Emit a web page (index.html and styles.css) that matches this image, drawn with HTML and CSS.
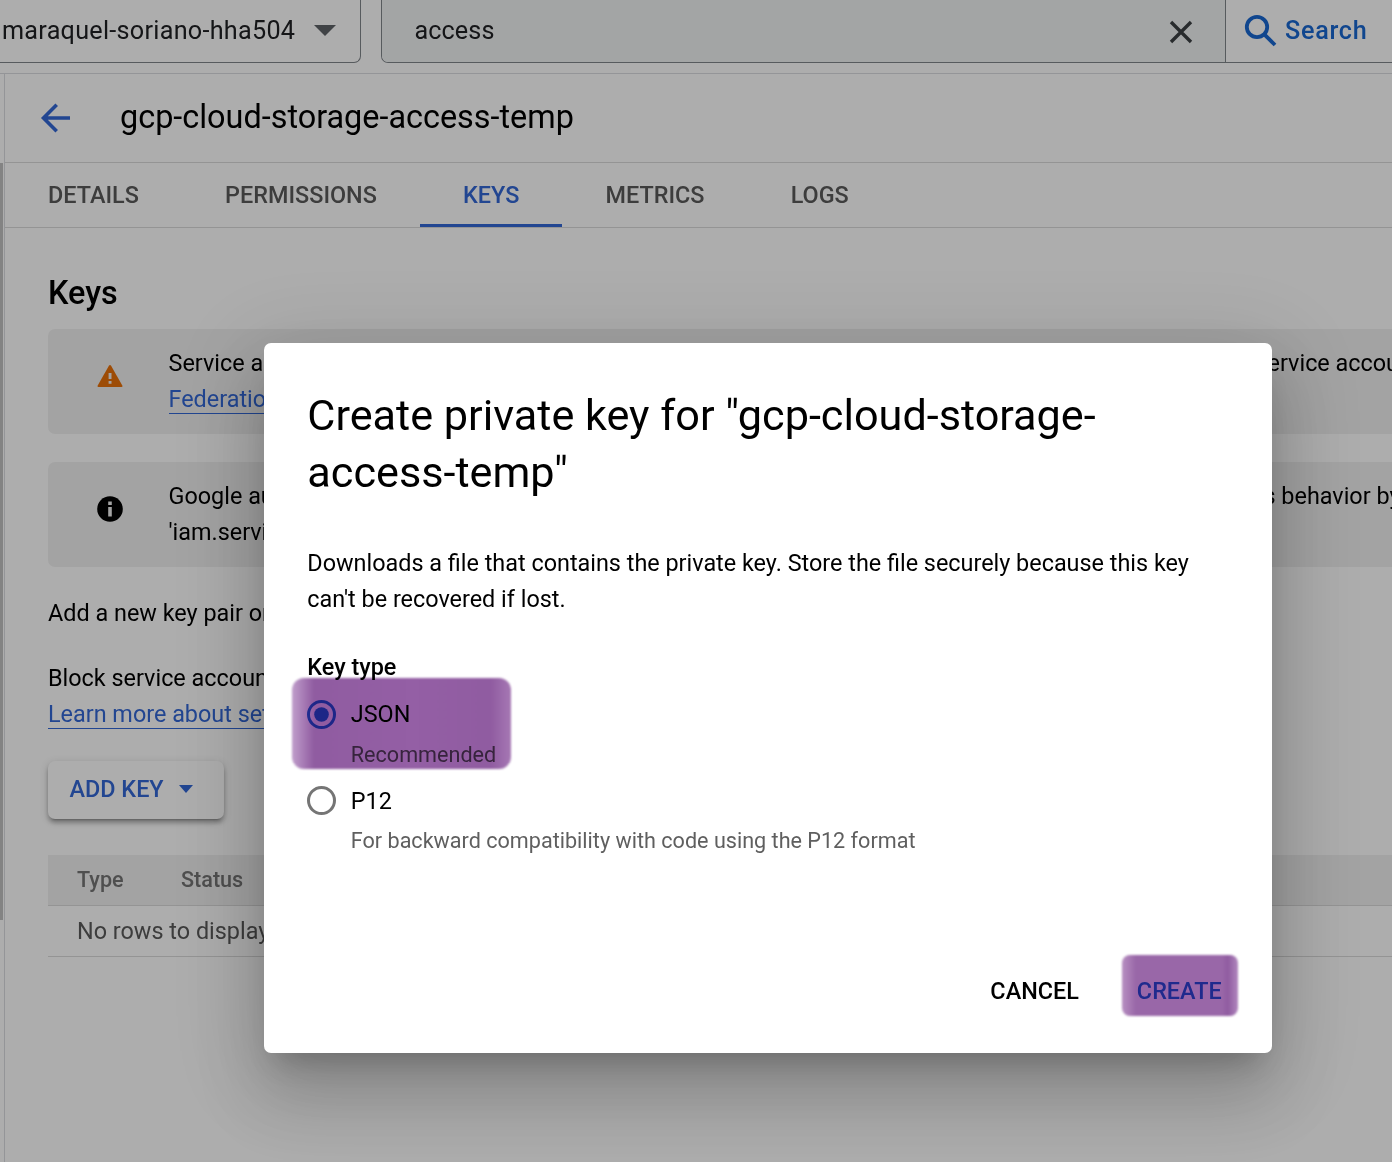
FILE: index.html
```html
<!DOCTYPE html>
<html lang="en">
<head>
<meta charset="utf-8">
<title>gcp-cloud-storage-access-temp</title>
<link rel="stylesheet" href="styles.css">
</head>
<body>
<div class="app">
  <header class="topbar">
    <div class="project"><span class="project-name">maraquel-soriano-hha504</span><svg class="project-caret" viewBox="0 0 22 11"><path d="M0 0h22L11 11z"/></svg></div>
    <div class="searchbox">
      <div class="query"><span class="query-text">access</span><svg class="clear" viewBox="0 0 24 24"><path d="M2 2l20 20M22 2L2 22"/></svg></div>
      <div class="search-button"><svg class="search-icon" viewBox="0 0 32 32"><circle cx="12" cy="12" r="10.2"/><path d="M19.3 19.3L30 30"/></svg><span class="search-label">Search</span></div>
    </div>
  </header>
  <div class="body">
    <aside class="rail"><div class="rail-thumb"></div></aside>
    <main class="page">
      <div class="page-head"><svg class="back" viewBox="0 0 30 30"><path d="M29 15H3M15.7 1.8L2.5 15l13.2 13.2"/></svg><h1 class="page-title">gcp-cloud-storage-access-temp</h1></div>
      <nav class="tabs">
        <a class="tab">DETAILS</a><a class="tab">PERMISSIONS</a><a class="tab tab-active">KEYS</a><a class="tab">METRICS</a><a class="tab">LOGS</a>
      </nav>
      <section class="content">
        <h2 class="section-title">Keys</h2>
        <div class="banner">
          <svg class="banner-icon" viewBox="0 0 26 26"><path class="warn" d="M13 2Q13.7 2 14.1 2.7L25.3 22.4Q26 24 24.5 24H1.500Q0 24 .7 22.400L11.900 2.700Q12.300 2 13 2z"/><path class="warn-mark" d="M11.600 10h2.900v6h-2.900zM11.600 18h2.900v2.800h-2.900z"/></svg>
          <p class="banner-text">Service a<br><a class="link">Federation</a></p>
          <p class="banner-rest rest-one">service accou</p>
        </div>
        <div class="banner">
          <svg class="banner-icon" viewBox="0 0 26 26"><circle cx="13" cy="13" r="12.800"/><path class="info-mark" d="M11.200 5.500h3.600v3.500h-3.600zM11.200 11h3.600v9.500h-3.600z"/></svg>
          <p class="banner-text">Google au<br>'iam.servic</p>
          <p class="banner-rest rest-two">s behavior by</p>
        </div>
        <p class="para">Add a new key pair or</p>
        <p class="para">Block service account<br><a class="link">Learn more about sett</a></p>
        <button class="add-key"><span class="add-label">ADD KEY</span><svg class="add-caret" viewBox="0 0 14 8"><path d="M0 0h14L7 8z"/></svg></button>
        <div class="table">
          <div class="table-head"><span class="col-type">Type</span><span>Status</span></div>
          <div class="table-row">No rows to display</div>
        </div>
      </section>
    </main>
  </div>
</div>
<div class="scrim">
  <div class="dialog">
    <h2 class="dialog-title">Create private key for "gcp-cloud-storage-<br>access-temp"</h2>
    <p class="dialog-text">Downloads a file that contains the private key. Store the file securely because this key<br>can't be recovered if lost.</p>
    <div class="group-label">Key type</div>
    <div class="option">
      <svg class="radio radio-on" viewBox="0 0 30 30"><circle class="ring" cx="14.500" cy="14.500" r="13"/><circle class="dot" cx="14.500" cy="14.500" r="7.300"/></svg>
      <div class="option-body"><div class="option-name">JSON</div><div class="option-hint">Recommended</div></div>
      <span class="marker marker-json"></span>
    </div>
    <div class="option option-p12">
      <svg class="radio" viewBox="0 0 30 30"><circle class="ring" cx="14.500" cy="14.500" r="13"/></svg>
      <div class="option-body"><div class="option-name">P12</div><div class="option-hint">For backward compatibility with code using the P12 format</div></div>
    </div>
    <div class="actions">
      <button class="action">CANCEL</button>
      <button class="action action-create">CREATE<span class="marker marker-create"></span></button>
    </div>
  </div>
</div>
</body>
</html>
```

FILE: styles.css
```css
* { box-sizing: border-box; }
html, body { margin: 0; height: 1162px; overflow: hidden; }
body { background: #fff; color: #000; font: 400 23.4px/36px Roboto, "Liberation Sans", sans-serif; position: relative; }
h1, h2, p { margin: 0; font-weight: 400; }
button { font: inherit; border: 0; background: none; padding: 0; }
svg { display: block; flex: none; overflow: visible; }

.app { height: 1162px; display: flex; flex-direction: column; }
.topbar { height: 74px; flex: none; display: flex; gap: 20px; border-bottom: 1px solid #dadce0; overflow: hidden; }
.project { width: 361px; height: 63px; flex: none; display: flex; align-items: center; padding: 0 0 1px 2px; border: solid #80868b; border-width: 0 1px 1px 0; border-radius: 0 0 7px 0; }
.project-name { width: 312px; color: #202124; font-size: 25.2px; letter-spacing: .27px; white-space: nowrap; }
.project-caret { width: 22px; height: 11px; margin-bottom: 1px; fill: #5f6368; }
.searchbox { flex: 1; height: 63px; display: flex; border: solid #80868b; border-width: 0 0 1px 1px; border-radius: 0 0 0 7px; overflow: hidden; }
.query { width: 844px; flex: none; display: flex; align-items: center; justify-content: space-between; padding: 0 32px 0 32.5px; background: #f1f3f4; border-right: 1px solid #80868b; }
.query-text { font-size: 25.2px; color: #202124; letter-spacing: .1px; padding-bottom: 1px; }
.clear { width: 24px; height: 24px; margin-top: 2px; fill: none; stroke: #3c4043; stroke-width: 3.400; }
.search-button { display: flex; align-items: center; gap: 8px; padding: 0 0 1px 19px; color: #1967d2; }
.search-icon { width: 32px; height: 32px; fill: none; stroke: currentColor; stroke-width: 3.800; }
.search-label { font: 500 25.2px/36px Roboto, sans-serif; letter-spacing: .7px; }

.body { flex: 1; display: flex; min-height: 0; }
.rail { width: 5px; flex: none; border-right: 1px solid #dadce0; padding-top: 89px; }
.rail-thumb { width: 3px; height: 757px; background: #c1c1c1; }
.page { flex: 1; min-width: 0; }
.page-head { height: 89px; display: flex; align-items: center; gap: 49px; padding: 0 0 1px 36px; border-bottom: 1px solid #dadada; }
.back { width: 30px; height: 30px; fill: none; stroke: #3367d6; stroke-width: 3.600; }
.page-title { font-size: 32.4px; line-height: 43px; }
.tabs { height: 65px; display: flex; border-bottom: 1px solid #dadada; }
.tab { height: 64px; padding: 0 43.1px; line-height: 64px; font-weight: 500; color: #5a5a5a; }
.tab-active { color: #3367d6; border-bottom: 3px solid #3367d6; }

.content { padding: 44px 0 0 43px; }
.section-title { font-size: 32.4px; line-height: 43px; font-weight: 500; margin-bottom: 14px; }
.banner { height: 105px; margin-bottom: 28px; display: flex; padding: 16px 0 0 48.500px; background: #f1f1f1; border-radius: 7px 0 0 7px; overflow: hidden; }
.banner-icon { width: 26px; height: 26px; margin: 18px 46px 0 0; }
.banner-text { width: 1090px; flex: none; white-space: nowrap; }
.banner-rest { white-space: nowrap; }
.rest-one { margin-left: -3px; }
.rest-two { margin-left: 5px; }
.warn { fill: #e8710a; }
.warn-mark, .info-mark { fill: #f1f1f1; }
.link { color: #3367d6; border-bottom: 1px solid #3367d6; }
.para { margin-bottom: 29px; white-space: nowrap; }
.add-key { width: 176px; height: 58px; display: flex; align-items: center; gap: 15px; padding: 0 0 2px 21.500px; border-radius: 7px; color: #3367d6; font-weight: 500; background: #fff; box-shadow: 0 5px 2px -4px rgba(0,0,0,.2), 0 4px 4px rgba(0,0,0,.24), 0 2px 8px rgba(0,0,0,.16); }
.add-caret { width: 14px; height: 8px; fill: currentColor; }
.table { margin-top: 36px; font-size: 21.600px; color: #5a5a5a; }
.table-head { height: 51px; line-height: 50px; padding-left: 29px; display: flex; background: #f1f1f1; border-bottom: 1px solid #dadada; font-weight: 500; color: #757575; }
.col-type { width: 104px; }
.table-row { height: 51px; line-height: 50px; padding-left: 29px; border-bottom: 1px solid #dadada; font-size: 23.400px; }

.scrim { position: absolute; inset: 0; padding: 343px 0 0 264px; background: rgba(0,0,0,.32); }
.dialog { width: 1008px; height: 710px; display: flex; flex-direction: column; padding: 44px 34px 34px 43.300px; border-radius: 7px; background: #fff; box-shadow: 0 20px 27px -13px rgba(0,0,0,.2), 0 43px 68px 5px rgba(0,0,0,.14), 0 16px 83px 14px rgba(0,0,0,.12); }
.dialog-title { font-size: 43.200px; line-height: 57px; white-space: nowrap; }
.dialog-text { margin-top: 44px; white-space: nowrap; }
.group-label { margin-top: 32px; font-weight: 500; }
.option { position: relative; display: flex; gap: 13.500px; height: 86px; padding-top: 11px; }
.option-p12 { padding-top: 12px; }
.radio { width: 30px; height: 30px; margin-top: 4px; fill: none; color: #757575; }
.option-p12 .radio { margin-top: 3px; }
.radio-on { color: #3367d6; }
.ring { stroke: currentColor; stroke-width: 3; }
.dot { fill: currentColor; }
.option-hint { margin-top: 5px; font-size: 21.600px; color: #5f5f5f; white-space: nowrap; }
.option-p12 .option-hint { margin-top: 4px; }
.actions { margin-top: auto; display: flex; justify-content: flex-end; gap: 58px; padding: 0 16.400px 10px 0; }
.action { position: relative; font-weight: 500; color: #000; }
.action-create { color: #3367d6; }

/* Highlighter strokes: soft at the ends, text shows through */
.marker { position: absolute; mix-blend-mode: multiply; border-radius: 12px; filter: blur(1.200px); }
.marker-json { left: -15.500px; top: -7px; width: 219px; height: 91px; background: linear-gradient(90deg, #c09ecb 0, #905ca1 22px, #945fa5 55%, #905ca1 199px, #a678b4 100%); }
.marker-create { left: -15px; top: -18px; width: 116px; height: 61px; border-radius: 8px; background: linear-gradient(90deg, #b78fc1 0, #9967a8 14px, #9967a8 100px, #905ca1 106px, #b187be 100%); }
```
